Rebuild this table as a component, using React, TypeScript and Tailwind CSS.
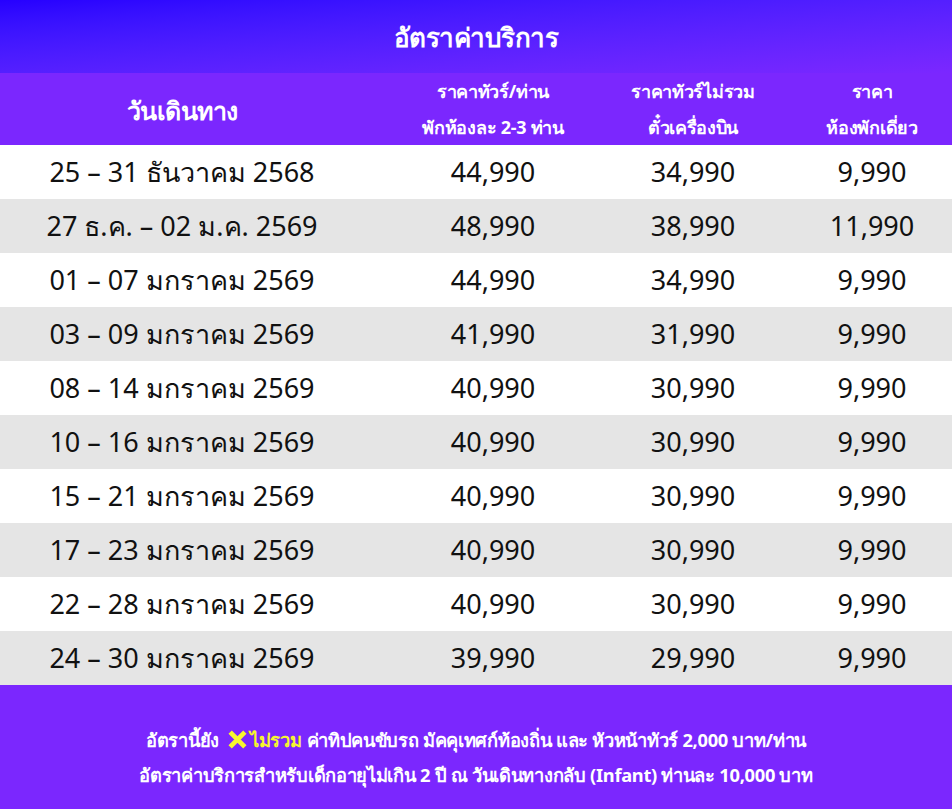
import React from "react";

const rows: [string, string, string, string][] = [
  ["25 – 31 ธันวาคม 2568", "44,990", "34,990", "9,990"],
  ["27 ธ.ค. – 02 ม.ค. 2569", "48,990", "38,990", "11,990"],
  ["01 – 07 มกราคม 2569", "44,990", "34,990", "9,990"],
  ["03 – 09 มกราคม 2569", "41,990", "31,990", "9,990"],
  ["08 – 14 มกราคม 2569", "40,990", "30,990", "9,990"],
  ["10 – 16 มกราคม 2569", "40,990", "30,990", "9,990"],
  ["15 – 21 มกราคม 2569", "40,990", "30,990", "9,990"],
  ["17 – 23 มกราคม 2569", "40,990", "30,990", "9,990"],
  ["22 – 28 มกราคม 2569", "40,990", "30,990", "9,990"],
  ["24 – 30 มกราคม 2569", "39,990", "29,990", "9,990"],
];

const cols = "grid grid-cols-[364px_258px_142px_188px]";

export default function App() {
  return (
    <div className="w-[952px] h-[809px] bg-white overflow-hidden" style={{ fontFamily: '"Noto Sans", "Liberation Sans", sans-serif' }}>
      <div className="h-[73px] bg-linear-to-br from-[#2600ff] to-[#7b27ff] flex items-center justify-center">
        <span className="text-white text-[26px] font-bold leading-none tracking-[-0.5px]">อัตราค่าบริการ</span>
      </div>
      <div className={`${cols} h-[72px] bg-[#7b27fe] text-white font-bold`}>
        <div className="flex items-center justify-center text-[25px] tracking-[-0.5px]">วันเดินทาง</div>
        <div className="flex flex-col items-center justify-center pb-[3px] text-[18px] leading-[36px] tracking-[-0.3px]">
          <span>ราคาทัวร์/ท่าน</span>
          <span>พักห้องละ 2-3 ท่าน</span>
        </div>
        <div className="flex flex-col items-center justify-center pb-[3px] text-[18px] leading-[36px] tracking-[-0.3px]">
          <span>ราคาทัวร์ไม่รวม</span>
          <span>ตั๋วเครื่องบิน</span>
        </div>
        <div className="flex flex-col items-center justify-center pb-[3px] pl-[28px] text-[18px] leading-[36px] tracking-[-0.3px]">
          <span>ราคา</span>
          <span>ห้องพักเดี่ยว</span>
        </div>
      </div>
      <div>
        {rows.map((r, i) => (
          <div
            key={i}
            className={`${cols} h-[54px] items-center text-[27px] text-[#111] ${i % 2 === 1 ? "bg-[#e5e5e5]" : "bg-white"}`}
          >
            <div className="text-center">{r[0]}</div>
            <div className="text-center">{r[1]}</div>
            <div className="text-center">{r[2]}</div>
            <div className="text-center pl-[28px]">{r[3]}</div>
          </div>
        ))}
      </div>
      <div className="h-[124px] bg-[#7b27fe] flex flex-col items-center justify-center pt-[20px] text-white font-bold text-[18.3px] leading-[35px] tracking-[-0.3px]">
        <div className="flex items-center">
          <span>อัตรานี้ยัง</span>
          <svg width="21" height="19" viewBox="0 0 20 18" className="ml-[8px] mr-[2px]">
            <path d="M3 2 L17 16 M17 2 L3 16" stroke="#f7f72e" strokeWidth="4.5" strokeLinecap="butt" />
          </svg>
          <span className="text-[#f7f72e]">ไม่รวม</span>
          <span className="ml-[5px]">ค่าทิปคนขับรถ มัคคุเทศก์ท้องถิ่น และ หัวหน้าทัวร์ 2,000 บาท/ท่าน</span>
        </div>
        <div>อัตราค่าบริการสำหรับเด็กอายุไม่เกิน 2 ปี ณ วันเดินทางกลับ (Infant) ท่านละ 10,000 บาท</div>
      </div>
    </div>
  );
}
